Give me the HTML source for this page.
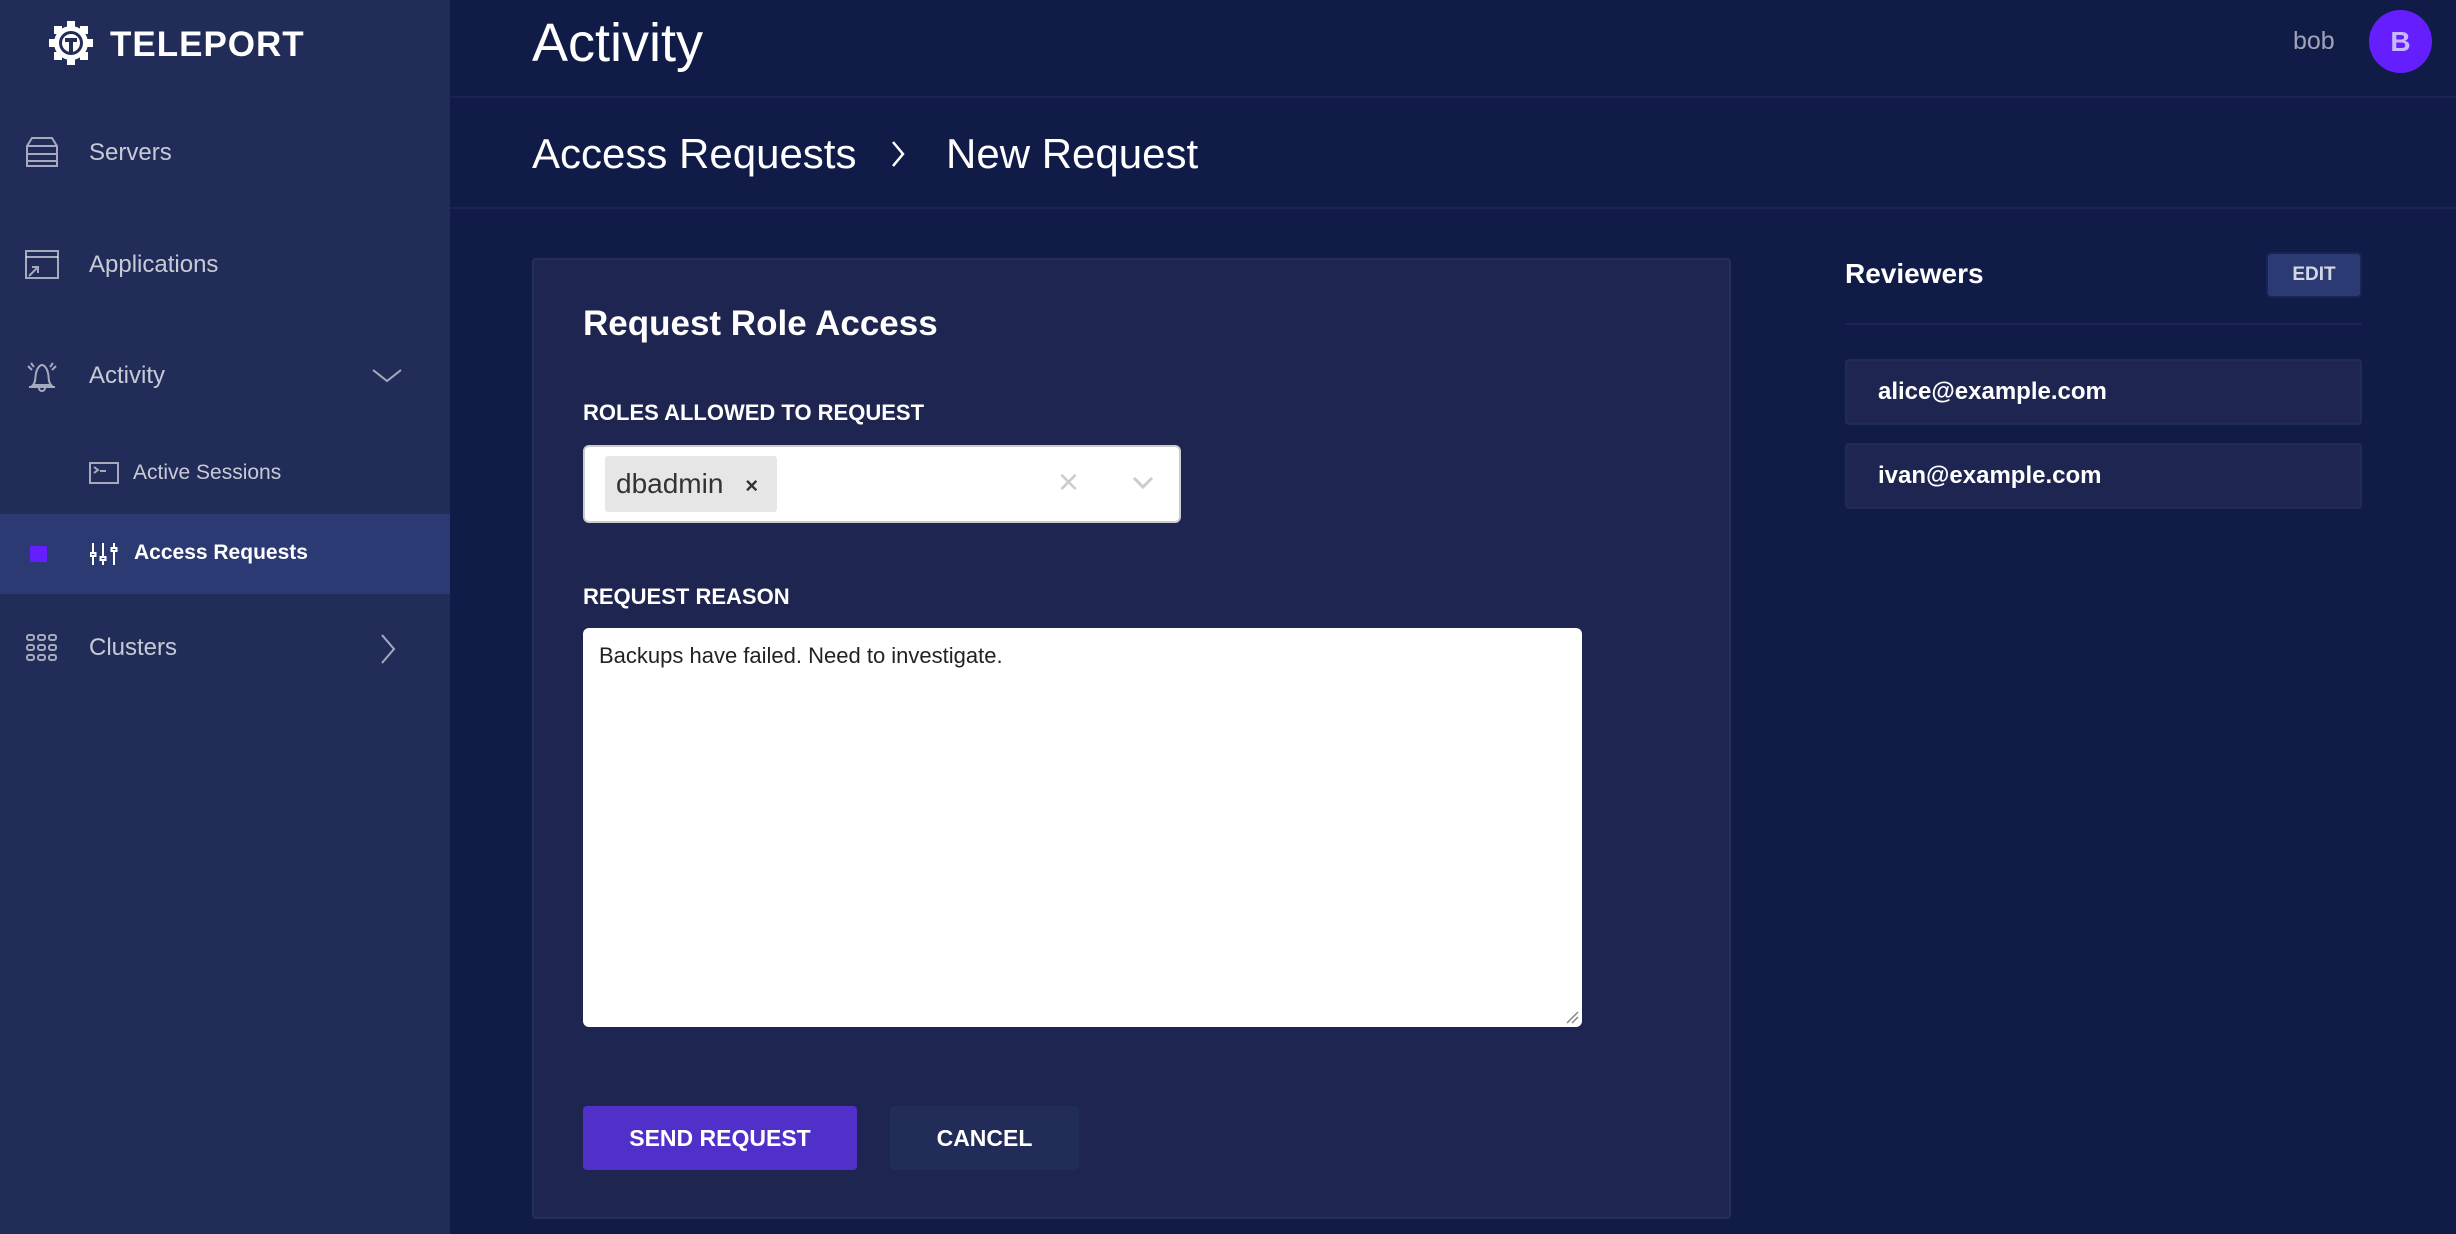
<!DOCTYPE html>
<html><head><meta charset="utf-8"><style>
*{box-sizing:border-box;margin:0;padding:0}
body{width:2456px;height:1234px;overflow:hidden;background:#111B48;font-family:"Liberation Sans",sans-serif;color:#fff;position:relative}
.abs{position:absolute}
#side{left:0;top:0;width:450px;height:1234px;background:#222C59}
.nav{position:absolute;left:89px;font-size:24px;color:rgba(255,255,255,.75);line-height:1}
.ico{position:absolute;stroke:rgba(255,255,255,.6);fill:none;stroke-width:2}
.lbl{position:absolute;font-size:22px;font-weight:bold;color:#fff;left:583px}
</style></head><body>
<div id="side" class="abs">
  <svg class="abs" style="left:48px;top:20px" width="46" height="46" viewBox="0 0 46 46"><circle cx="23" cy="23" r="17" fill="#fff"/><g fill="#fff"><rect x="19" y="1" width="8" height="8"/><rect x="19" y="37" width="8" height="8"/><rect x="1" y="19" width="8" height="8"/><rect x="37" y="19" width="8" height="8"/><rect x="6" y="6" width="8" height="8"/><rect x="32" y="6" width="8" height="8"/><rect x="6" y="32" width="8" height="8"/><rect x="32" y="32" width="8" height="8"/></g><circle cx="23" cy="23" r="12" fill="#222C59"/><circle cx="23" cy="23" r="9" fill="#fff"/><path d="M17 18h12v4h-4v10h-4V22h-4z" fill="#222C59"/></svg>
  <div class="abs" style="left:110px;top:25px;font-size:35px;font-weight:bold;letter-spacing:1px">TELEPORT</div>

  <svg class="ico" style="left:25px;top:136px" width="34" height="34" viewBox="0 0 34 34"><path d="M7 2h20l5 8v20H2V10z M2 10h30 M2 18h30 M2 25h30"/></svg>
  <div class="nav" style="top:141px">Servers</div>
  <svg class="ico" style="left:25px;top:250px" width="34" height="30" viewBox="0 0 34 30"><rect x="1" y="1" width="32" height="27"/><path d="M1 7h32 M4 26l9-9 M7 17h6v6"/></svg>
  <div class="nav" style="top:253px">Applications</div>
  <svg class="ico" style="left:25px;top:360px" width="34" height="34" viewBox="0 0 34 34"><path d="M8 25c3-3 2-8 3-12 1-5 4-8 6-8s5 3 6 8c1 4 0 9 3 12z M4 27h26 M14 28a3 3 0 0 0 6 0 M3 6l4 4 M31 6l-4 4 M6 3l3 4 M28 3l-3 4"/></svg>
  <div class="nav" style="top:364px">Activity</div>
  <svg class="ico" style="left:372px;top:368px" width="30" height="16" viewBox="0 0 30 16"><path d="M1 2l14 11 14-11"/></svg>

  <svg class="ico" style="left:89px;top:462px" width="30" height="22" viewBox="0 0 30 22"><rect x="1" y="1" width="28" height="20"/><path d="M5 5l4 3-4 3 M11 9h6"/></svg>
  <div class="nav" style="left:133px;top:462px;font-size:21px">Active Sessions</div>

  <div class="abs" style="left:0;top:514px;width:450px;height:80px;background:#2C3A73"></div>
  <div class="abs" style="left:30px;top:546px;width:17px;height:16px;background:#651FFF"></div>
  <svg class="abs" style="left:90px;top:542px" width="28" height="24" viewBox="0 0 28 24" stroke="#fff" fill="none" stroke-width="2"><path d="M3 1v22 M13 1v22 M24 1v22"/><rect x="0.5" y="11" width="5" height="3" fill="#2C3A73"/><rect x="10.5" y="15" width="5" height="3" fill="#2C3A73"/><rect x="21.5" y="6" width="5" height="3" fill="#2C3A73"/></svg>
  <div class="nav" style="left:134px;top:542px;font-size:21px;font-weight:bold;color:#fff">Access Requests</div>

  <svg class="ico" style="left:26px;top:634px" width="32" height="28" viewBox="0 0 32 28"><g><rect x="1" y="1" width="7" height="5" rx="2"/><rect x="12" y="1" width="7" height="5" rx="2"/><rect x="23" y="1" width="7" height="5" rx="2"/><rect x="1" y="11" width="7" height="5" rx="2"/><rect x="12" y="11" width="7" height="5" rx="2"/><rect x="23" y="11" width="7" height="5" rx="2"/><rect x="1" y="21" width="7" height="5" rx="2"/><rect x="12" y="21" width="7" height="5" rx="2"/><rect x="23" y="21" width="7" height="5" rx="2"/></g></svg>
  <div class="nav" style="top:636px">Clusters</div>
  <svg class="ico" style="left:380px;top:634px" width="16" height="30" viewBox="0 0 16 30"><path d="M2 1l12 14-12 14"/></svg>
</div>

<div class="abs" style="left:532px;top:11px;font-size:54px;line-height:64px">Activity</div>
<div class="abs" style="left:2293px;top:27px;font-size:25px;color:rgba(255,255,255,.6)">bob</div>
<div class="abs" style="left:2369px;top:10px;width:63px;height:63px;border-radius:50%;background:#651FFF;color:#c9b6ff;font-size:28px;font-weight:bold;text-align:center;line-height:63px">B</div>
<div class="abs" style="left:450px;top:96px;width:2006px;height:2px;background:#1A2352"></div>

<div class="abs" style="left:532px;top:127px;font-size:42px;line-height:54px">Access Requests</div>
<svg class="abs" style="left:890px;top:140px;stroke:#fff;fill:none;stroke-width:2.5" width="16" height="28" viewBox="0 0 16 28"><path d="M3 2l10 12-10 12"/></svg>
<div class="abs" style="left:946px;top:127px;font-size:42px;line-height:54px">New Request</div>
<div class="abs" style="left:450px;top:207px;width:2006px;height:2px;background:#1A2352"></div>

<div class="abs" style="left:532px;top:258px;width:1199px;height:961px;background:#1E2550;border:2px solid #262F5C;border-radius:4px"></div>
<div class="abs" style="left:583px;top:304px;font-size:35px;font-weight:bold">Request Role Access</div>
<div class="lbl" style="top:400px">ROLES ALLOWED TO REQUEST</div>
<div class="abs" style="left:583px;top:445px;width:598px;height:78px;background:#fff;border:2px solid #ccc;border-radius:6px"></div>
<div class="abs" style="left:605px;top:456px;width:172px;height:56px;background:#e6e6e6;border-radius:3px;color:#333;font-size:28px;line-height:56px;padding-left:11px">dbadmin <span style="font-size:22px;margin-left:14px;font-weight:bold">×</span></div>
<div class="abs" style="left:1058px;top:462px;color:#ccc;font-size:36px;line-height:40px">×</div>
<svg class="abs" style="left:1132px;top:476px;stroke:#ccc;fill:none;stroke-width:3" width="22" height="14" viewBox="0 0 22 14"><path d="M2 2l9 9 9-9"/></svg>

<div class="lbl" style="top:584px">REQUEST REASON</div>
<div class="abs" style="left:583px;top:628px;width:999px;height:399px;background:#fff;border-radius:6px;color:#222;font-size:22px;padding:15px 16px">Backups have failed. Need to investigate.</div>
<svg class="abs" style="left:1565px;top:1010px;stroke:#888;stroke-width:1.5" width="14" height="14"><path d="M2 13L13 2M7 13l6-6"/></svg>

<div class="abs" style="left:583px;top:1106px;width:274px;height:64px;background:#512FC9;border-radius:4px;font-size:23px;font-weight:bold;text-align:center;line-height:64px">SEND REQUEST</div>
<div class="abs" style="left:890px;top:1106px;width:189px;height:64px;background:#222C59;border-radius:4px;font-size:23px;font-weight:bold;text-align:center;line-height:64px">CANCEL</div>

<div class="abs" style="left:1845px;top:258px;font-size:28px;font-weight:bold">Reviewers</div>
<div class="abs" style="left:2266px;top:252px;width:96px;height:46px;background:#2C3A73;border:2px solid #1A2352;border-radius:5px;font-size:19px;font-weight:bold;color:rgba(255,255,255,.8);text-align:center;line-height:42px">EDIT</div>
<div class="abs" style="left:1845px;top:323px;width:517px;height:2px;background:#1A2352"></div>
<div class="abs" style="left:1845px;top:359px;width:517px;height:66px;background:#1E2550;border:2px solid #222B58;border-radius:4px;font-size:24px;font-weight:bold;padding-left:31px;line-height:62px">alice@example.com</div>
<div class="abs" style="left:1845px;top:443px;width:517px;height:66px;background:#1E2550;border:2px solid #222B58;border-radius:4px;font-size:24px;font-weight:bold;padding-left:31px;line-height:62px">ivan@example.com</div>
</body></html>
